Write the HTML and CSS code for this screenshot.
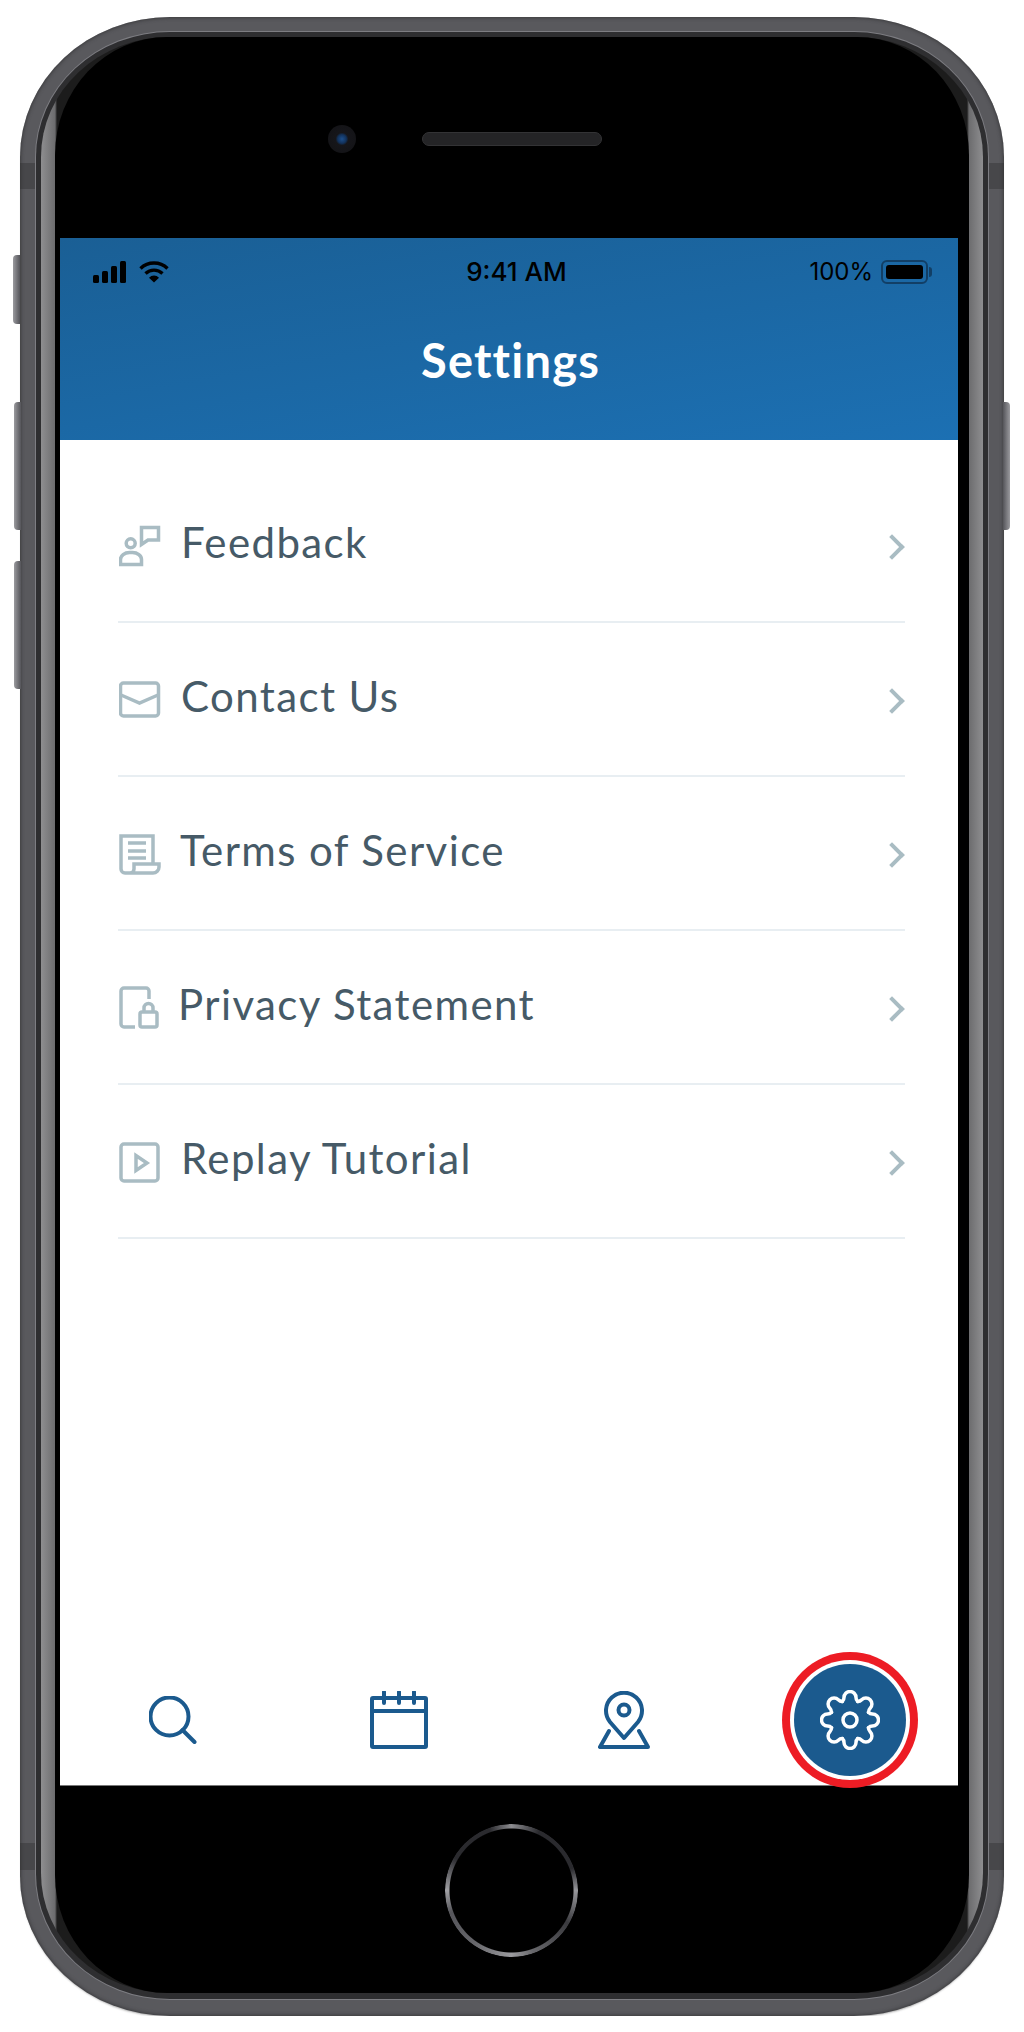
FILE: index.html
```html
<!DOCTYPE html>
<html lang="en">
<head>
    <meta charset="UTF-8">
    <meta name="viewport" content="width=device-width, initial-scale=1.0">
    <title>Settings</title>
    <link rel="stylesheet" href="styles.css">
</head>
<body>

<div class="phone">
    <span class="side-btn mute"></span>
    <span class="side-btn vol-up"></span>
    <span class="side-btn vol-down"></span>
    <span class="side-btn power"></span>

    <div class="rim">
        <div class="edge">
            <div class="bezel">
                <div class="top-bezel">
                    <span class="camera"></span>
                    <span class="speaker"></span>
                </div>

                <div class="screen">
                    <header class="header">
                        <div class="status-bar">
                            <div class="status-left">
                                <svg width="34" height="22" viewBox="0 0 34 22">
                                    <rect x="0" y="14" width="6" height="8" rx="1.5"/>
                                    <rect x="9" y="10" width="6" height="12" rx="1.5"/>
                                    <rect x="18" y="5" width="6" height="17" rx="1.5"/>
                                    <rect x="27" y="0" width="6" height="22" rx="1.5"/>
                                </svg>
                                <svg width="30" height="22" viewBox="0 0 30 22" fill="none" stroke="#000" stroke-width="3.4">
                                    <path d="M1.5 7.5a19.5 19.5 0 0 1 27 0"/>
                                    <path d="M6.5 12.5a12.5 12.5 0 0 1 17 0"/>
                                    <path d="M15 21.5l-5-4.800a7 7 0 0 1 10 0z" fill="#000" stroke="none"/>
                                </svg>
                            </div>
                            <div class="status-time">9:41 AM</div>
                            <div class="status-right">
                                <span>100%</span>
                                <span class="battery"><span class="battery-level"></span></span>
                            </div>
                        </div>
                        <h1 class="title">Settings</h1>
                    </header>

                    <ul class="menu">
                        <li class="menu-item">
                            <svg class="menu-icon" width="42" height="44" viewBox="0 0 42 44">
                                <circle cx="11.700" cy="19.300" r="4.500"/>
                                <path d="M1.500 40.500v-5a9 7 0 0 1 9-7h3a9 7 0 0 1 9 7v5z"/>
                                <path d="M22.500 20.500V3.500h17v12.500H29z"/>
                            </svg>
                            <span class="menu-label">Feedback</span>
                            <span class="chevron"></span>
                        </li>
                        <li class="menu-item">
                            <svg class="menu-icon" width="42" height="44" viewBox="0 0 42 44">
                                <rect x="1.500" y="5" width="38" height="33" rx="3"/>
                                <path d="M2 17l18.500 8 18.500-8"/>
                            </svg>
                            <span class="menu-label">Contact Us</span>
                            <span class="chevron"></span>
                        </li>
                        <li class="menu-item">
                            <svg class="menu-icon" width="42" height="44" viewBox="0 0 42 44">
                                <path d="M11 41H6a4 4 0 0 1-4-4V4h32v27"/>
                                <path d="M9 11h18M9 19h18M9 26h18"/>
                                <path d="M11 41a4 4 0 0 0 4-4v-5h25v3a6 6 0 0 1-6 6z"/>
                            </svg>
                            <span class="menu-label menu-label-terms">Terms of Service</span>
                            <span class="chevron"></span>
                        </li>
                        <li class="menu-item">
                            <svg class="menu-icon" width="42" height="44" viewBox="0 0 42 44">
                                <path d="M16 41H5a3 3 0 0 1-3-3V5a3 3 0 0 1 3-3h22a3 3 0 0 1 3 3v8"/>
                                <rect x="21" y="26" width="17" height="15" rx="2"/>
                                <path d="M25 26v-4a4.500 4.500 0 0 1 9 0v4"/>
                            </svg>
                            <span class="menu-label menu-label-privacy">Privacy Statement</span>
                            <span class="chevron"></span>
                        </li>
                        <li class="menu-item">
                            <svg class="menu-icon" width="42" height="44" viewBox="0 0 42 44">
                                <rect x="2" y="4" width="37" height="37" rx="3"/>
                                <path d="M17 15.500v15l11-7.500z"/>
                            </svg>
                            <span class="menu-label">Replay Tutorial</span>
                            <span class="chevron"></span>
                        </li>
                    </ul>

                    <nav class="tabs">
                        <div class="tab">
                            <svg width="48" height="48" viewBox="0 0 48 48">
                                <circle cx="20.500" cy="20.500" r="19"/>
                                <path d="M33.500 34l12 12"/>
                            </svg>
                        </div>
                        <div class="tab">
                            <svg width="58" height="58" viewBox="0 0 58 58">
                                <rect x="2" y="7" width="54" height="49" rx="1"/>
                                <path d="M2 20h54M14 1v11M29 1v11M44 1v11"/>
                            </svg>
                        </div>
                        <div class="tab">
                            <svg width="54" height="58" viewBox="0 0 54 58">
                                <path d="M26 47L12 31a18 18 0 1 1 28 0z"/>
                                <circle cx="26" cy="19" r="5.500"/>
                                <path d="M11 40L2 56h48L41 40"/>
                            </svg>
                        </div>
                        <div class="tab">
                            <span class="tab-active">
                                <svg width="60" height="60" viewBox="0 0 60 60">
                                    <circle cx="30" cy="30" r="7"/>
                                    <path d="M22.350 11.500Q24 10 24 7.500A6 6 0 0 1 36 7.500Q36 10 37.650 11.500"/>
                                    <path transform="rotate(45 30 30)" d="M22.350 11.500Q24 10 24 7.500A6 6 0 0 1 36 7.500Q36 10 37.650 11.500"/>
                                    <path transform="rotate(90 30 30)" d="M22.350 11.500Q24 10 24 7.500A6 6 0 0 1 36 7.500Q36 10 37.650 11.500"/>
                                    <path transform="rotate(135 30 30)" d="M22.350 11.500Q24 10 24 7.500A6 6 0 0 1 36 7.500Q36 10 37.650 11.500"/>
                                    <path transform="rotate(180 30 30)" d="M22.350 11.500Q24 10 24 7.500A6 6 0 0 1 36 7.500Q36 10 37.650 11.500"/>
                                    <path transform="rotate(225 30 30)" d="M22.350 11.500Q24 10 24 7.500A6 6 0 0 1 36 7.500Q36 10 37.650 11.500"/>
                                    <path transform="rotate(270 30 30)" d="M22.350 11.500Q24 10 24 7.500A6 6 0 0 1 36 7.500Q36 10 37.650 11.500"/>
                                    <path transform="rotate(315 30 30)" d="M22.350 11.500Q24 10 24 7.500A6 6 0 0 1 36 7.500Q36 10 37.650 11.500"/>
                                </svg>
                            </span>
                        </div>
                    </nav>
                </div>

                <div class="bottom-bezel">
                    <span class="home-btn"></span>
                </div>
            </div>
        </div>
    </div>
</div>

</body>
</html>
```

FILE: styles.css
```css
* {
    box-sizing: border-box;
}

body {
    margin: 0;
    background-color: #fff;
    font-family: Lato, "Open Sans", sans-serif;
}

/* device frame */
.phone {
    position: relative;
    width: 984px;
    height: 1999px;
    margin: 17px 0 0 20px;
    padding: 15px 16px 17px;
    border-radius: 150px / 140px;
    background: linear-gradient(to bottom, #59595d 0, #59595d 146px, #47474a 146px, #47474a 172px, #59595d 172px, #59595d 1826px, #47474a 1826px, #47474a 1853px, #59595d 1853px);
    box-shadow: inset 0 0 4px #2d2d2f, 0 2px 2px -1px rgba(0, 0, 0, 0.3);
}

.rim {
    height: 100%;
    padding: 5px 5px 6px;
    border-radius: 134px / 125px;
    background-color: #2e2e30;
    box-shadow: 0 0 0 1px #7d7d82;
}

.edge {
    height: 100%;
    padding: 0 14px;
    border-radius: 128px / 120px;
    background: linear-gradient(to right, #8e8e90, #6c6c6e 14px, #1c1c1c 16px, #1c1c1c calc(100% - 16px), #6c6c6e calc(100% - 14px), #8e8e90);
}

.bezel {
    display: flex;
    flex-direction: column;
    height: 100%;
    padding: 0 11px 0 5px;
    border-radius: 112px / 118px;
    background-color: #000;
}

.top-bezel {
    position: relative;
    height: 201px;
    flex-shrink: 0;
}

.camera {
    position: absolute;
    left: 268px;
    top: 88px;
    width: 28px;
    height: 28px;
    border-radius: 50%;
    background: radial-gradient(circle, #1d4f8c 0, #12315a 22%, #16161a 32%, #121215 100%);
}

.speaker {
    position: absolute;
    left: 362px;
    top: 95px;
    width: 180px;
    height: 14px;
    border-radius: 7px;
    border: 1px solid #333335;
    background-color: #242426;
}

/* app screen */
.screen {
    display: flex;
    flex-direction: column;
    height: 1548px;
    flex-shrink: 0;
    background-color: #fff;
    border-bottom: 1px solid #777;
}

.header {
    height: 202px;
    padding-top: 18px;
    background: linear-gradient(170deg, #1a5f95, #1c70b3);
}

.status-bar {
    display: grid;
    grid-template-columns: 1fr auto 1fr;
    align-items: center;
    height: 26px;
    padding: 0 30px 0 33px;
    font-family: Inter, sans-serif;
    font-size: 24px;
    color: #000;
}

.status-left {
    display: flex;
    align-items: center;
    gap: 12px;
}

.status-time {
    margin-left: 12px;
    font-size: 26px;
    font-weight: 500;
}

.status-right {
    display: flex;
    align-items: center;
    justify-content: flex-end;
    gap: 8px;
}

.battery {
    position: relative;
    display: block;
    width: 47px;
    height: 24px;
    padding: 3px;
    border: 2px solid #123f66;
    border-radius: 6px;
}

.battery::after {
    content: "";
    position: absolute;
    right: -6px;
    top: 5px;
    width: 3px;
    height: 10px;
    border-radius: 0 3px 3px 0;
    background-color: #123f66;
}

.battery-level {
    display: block;
    height: 100%;
    border-radius: 3px;
    background-color: #000;
}

.title {
    margin: 50px 0 0 3px;
    text-align: center;
    font-size: 47px;
    line-height: 56px;
    letter-spacing: 1.2px;
    font-weight: 700;
    color: #fff;
}

/* list */
.menu {
    flex: 1;
    list-style: none;
    margin: 0;
    padding: 29px 53px 0 58px;
}

.menu-item {
    display: flex;
    align-items: center;
    height: 154px;
    padding-bottom: 6px;
    border-bottom: 2px solid #e8eef2;
}

.menu-icon {
    flex-shrink: 0;
    margin: 8px 20px 0 1px;
    fill: none;
    stroke: #a9bcc3;
    stroke-width: 3.5;
}

.menu-label {
    flex: 1;
    font-size: 42px;
    letter-spacing: 1.4px;
    color: #465a67;
}

.menu-label-terms {
    margin-left: -1px;
}

.menu-label-privacy {
    margin-left: -3px;
}

.chevron {
    width: 18px;
    height: 18px;
    margin: 10px 4px 0 0;
    border-top: 4px solid #a9bcc3;
    border-right: 4px solid #a9bcc3;
    transform: rotate(45deg);
}

/* bottom tabs */
.tabs {
    display: grid;
    grid-template-columns: repeat(4, 226px);
    height: 130px;
}

.tab {
    display: flex;
    align-items: center;
    justify-content: center;
}

.tab svg {
    fill: none;
    stroke: #1b5a8e;
    stroke-width: 4;
    stroke-linecap: round;
    stroke-linejoin: round;
}

.tab-active {
    display: flex;
    align-items: center;
    justify-content: center;
    width: 112px;
    height: 112px;
    margin-left: -2px;
    border-radius: 50%;
    background-color: #1b5a8e;
    box-shadow: 0 0 0 4px #fff, 0 0 0 12px #ed1c24;
}

.tab .tab-active svg {
    stroke: #fff;
    stroke-width: 3.5;
}

.bottom-bezel {
    display: flex;
    justify-content: center;
    padding-top: 38px;
    flex: 1;
}

.home-btn {
    width: 133px;
    height: 133px;
    margin-left: 4px;
    border-radius: 50%;
    background: conic-gradient(#8c8c90 0deg, #2a2a2e 25deg, #2a2a2e 70deg, #98989c 90deg, #3a3a3e 120deg, #66666a 160deg, #9a9a9e 180deg, #66666a 215deg, #55555a 250deg, #a0a0a4 270deg, #2a2a2e 300deg, #2a2a2e 340deg, #8c8c90 360deg);
    -webkit-mask: radial-gradient(closest-side, transparent calc(100% - 5px), #000 calc(100% - 4px));
    mask: radial-gradient(closest-side, transparent calc(100% - 5px), #000 calc(100% - 4px));
}

/* hardware buttons */
.side-btn {
    position: absolute;
    width: 7px;
    border-radius: 4px 0 0 4px;
    background: linear-gradient(to right, #9a9a9e, #55555a);
}

.mute {
    left: -7px;
    top: 238px;
    height: 69px;
}

.vol-up {
    left: -6px;
    top: 385px;
    height: 128px;
}

.vol-down {
    left: -6px;
    top: 544px;
    height: 128px;
}

.power {
    right: -6px;
    top: 385px;
    height: 128px;
    border-radius: 0 4px 4px 0;
    background: linear-gradient(to left, #9a9a9e, #55555a);
}
```
